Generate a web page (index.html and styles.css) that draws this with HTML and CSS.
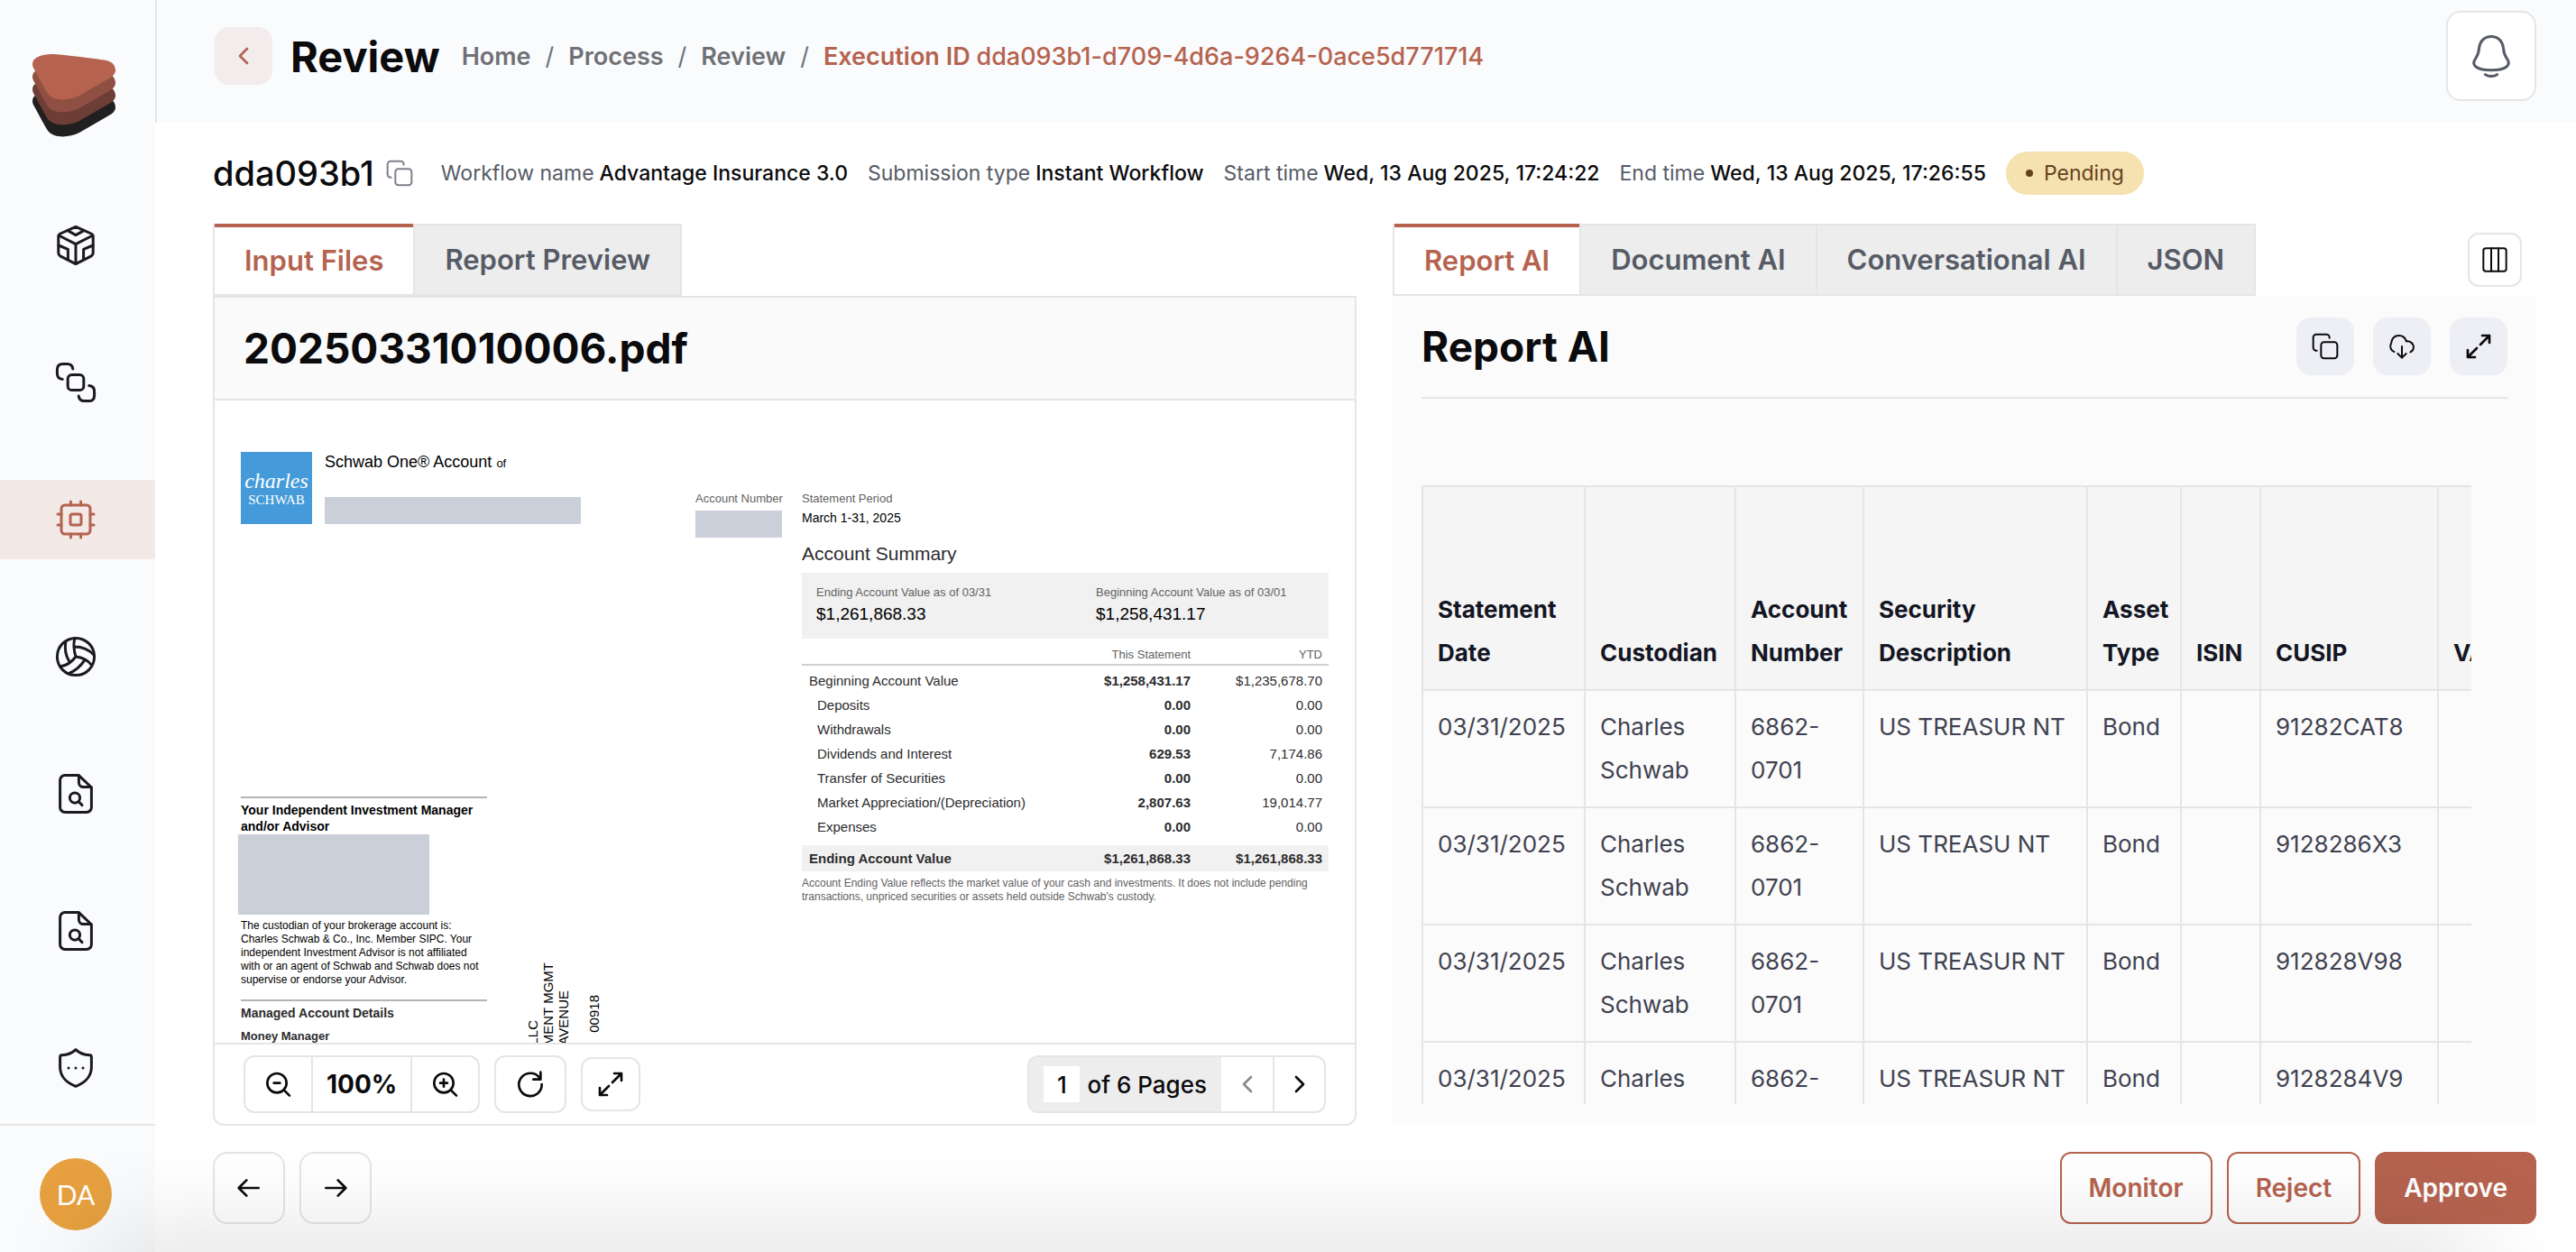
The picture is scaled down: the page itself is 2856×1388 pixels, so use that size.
FILE: index.html
```html
<!DOCTYPE html>
<html lang="en">
<head>
    <meta charset="UTF-8">
    <meta name="viewport" content="width=device-width, initial-scale=1.0">
    <title>Review</title>
    <link rel="stylesheet" href="styles.css">
</head>
<body>
    <!-- Shared icons -->
    <svg class="sprite" aria-hidden="true">
        <symbol id="icon-copy" viewBox="0 0 24 24">
            <rect x="8.5" y="8.5" width="13.5" height="13.5" rx="2.5"/>
            <path d="M15.5 5V4.5A2.5 2.5 0 0 0 13 2H4.5A2.5 2.5 0 0 0 2 4.5V13a2.5 2.5 0 0 0 2.5 2.5H5"/>
        </symbol>
        <symbol id="icon-expand" viewBox="0 0 24 24">
            <path d="M15 3h6v6M21 3l-7.5 7.5M9 21H3v-6M3 21l7.5-7.5"/>
        </symbol>
        <symbol id="icon-file-search" viewBox="0 0 24 24">
            <path d="M13.7 1.8H6A2.7 2.7 0 0 0 3.3 4.5v15A2.7 2.7 0 0 0 6 22.2h12a2.7 2.7 0 0 0 2.7-2.7V8.5Z"/>
            <path d="M13.7 2v3.8a2.5 2.5 0 0 0 2.5 2.5h4.3"/>
            <circle cx="11.5" cy="14.3" r="2.8"/>
            <path d="M13.6 16.4l1.9 1.9"/>
        </symbol>
        <symbol id="icon-left" viewBox="0 0 24 24"><path d="M15 6l-6 6 6 6"/></symbol>
        <symbol id="icon-right" viewBox="0 0 24 24"><path d="M9 6l6 6-6 6"/></symbol>
    </svg>

    <div class="app">
        <aside class="sidebar">
            <a href="#" class="logo" aria-label="Dashboard">
                <svg width="92" height="92" viewBox="0 0 92 92">
                    <defs>
                        <path id="layer" d="M0 11C0 4 9 0 22 0c8 0 48 5 60 7 7 1.5 10 6 10 11 0 4-3 7-8 9.5L52 46c-12 6-28 6-34-1C14 40 5 22 2 17 .5 14.5 0 13 0 11Z"/>
                    </defs>
                    <use href="#layer" y="41" fill="#211f20"/>
                    <use href="#layer" y="28" fill="#6c3e36"/>
                    <use href="#layer" y="14" fill="#8f4f42"/>
                    <use href="#layer" fill="#b5634f"/>
                </svg>
            </a>

            <nav class="side-nav">
                <a href="#" class="side-link" aria-label="Models">
                    <svg class="icon icon-48" viewBox="0 0 24 24">
                        <path d="M12 1.7L20.5 5.5Q21.6 6 21.6 7.2V16.3Q21.6 17.4 20.6 17.9L12 22.3 3.4 17.9Q2.4 17.4 2.4 16.3V7.2Q2.4 6 3.5 5.5Z"/>
                        <path d="M2.6 6.5L12 11.3l9.4-4.8M12 11.3V22M7.5 3.8L12 6.3l4.5-2.5M2.5 12l5.2 2.2v5.4M21.5 12l-5.2 2.2v5.4"/>
                    </svg>
                </a>
                <a href="#" class="side-link" aria-label="Workflows">
                    <svg class="icon icon-48" viewBox="0 0 24 24">
                        <rect x="7.6" y="7.7" width="8.8" height="8.6" rx="2.2"/>
                        <path d="M10.4 4.5C10.2 2.7 9.2 1.7 7.3 1.7H4.8C2.7 1.7 1.7 2.7 1.7 4.8V7C1.7 9 2.7 10 4.6 10.2"/>
                        <path d="M19.4 13.8c1.9.2 2.9 1.2 2.9 3.2v2.2c0 2.1-1 3.1-3.1 3.1h-2.5c-1.9 0-2.9-1-3.1-2.8"/>
                    </svg>
                </a>
                <a href="#" class="side-link active" aria-label="Process">
                    <svg class="icon icon-48" viewBox="0 0 24 24">
                        <rect x="4" y="4" width="16" height="16" rx="2"/>
                        <rect x="9" y="9" width="6" height="6" rx="1"/>
                        <path d="M9.2 4V2M14.8 4V2M9.2 22v-2M14.8 22v-2M4 9H2M4 15H2M22 9h-2M22 15h-2"/>
                    </svg>
                </a>
                <a href="#" class="side-link" aria-label="Explore">
                    <svg class="icon icon-48" viewBox="0 0 24 24">
                        <circle cx="12" cy="12" r="10.3"/>
                        <path d="M11.4 1.9C10.6 5 10.9 8.5 12 12M12 12c-2.2 3-5.2 5-8.7 5.5M12 12c3.6.3 6.7 2 8.8 4.7M6.4 3.7c-.6 4-.1 7.6 2 10.9M11.2 6.5c4.2 0 8 1.4 11 4.7M17.2 13.6C14.8 17.2 11.8 20 8 21.3"/>
                    </svg>
                </a>
                <a href="#" class="side-link" aria-label="Search documents">
                    <svg class="icon icon-48"><use href="#icon-file-search"/></svg>
                </a>
                <a href="#" class="side-link" aria-label="Search reports">
                    <svg class="icon icon-48"><use href="#icon-file-search"/></svg>
                </a>
                <a href="#" class="side-link" aria-label="Security">
                    <svg class="icon icon-48" viewBox="0 0 24 24">
                        <path d="M12 1.8C10 3.8 7.5 4.7 4.2 4.9Q3.3 5 3.3 6V11.5C3.3 17 7.5 20.5 12 22.2 16.5 20.5 20.7 17 20.7 11.5V6Q20.7 5 19.8 4.9C16.5 4.7 14 3.8 12 1.8Z"/>
                        <path d="M8 12h.01M12 12h.01M16 12h.01"/>
                    </svg>
                </a>
            </nav>

            <div class="user">
                <button class="avatar">DA</button>
            </div>
        </aside>

        <main class="main">
            <header class="topbar">
                <button class="back-btn" aria-label="Back"><svg class="icon icon-32 bold"><use href="#icon-left"/></svg></button>
                <h1>Review</h1>
                <nav class="breadcrumb">
                    <a href="#">Home</a><span>/</span>
                    <a href="#">Process</a><span>/</span>
                    <a href="#">Review</a><span>/</span>
                    <a href="#" class="current">Execution ID <em>dda093b1-d709-4d6a-9264-0ace5d771714</em></a>
                </nav>
                <button class="bell-btn" aria-label="Notifications">
                    <svg class="icon icon-48" viewBox="0 0 24 24">
                        <path d="M12 1.2c-3.8 0-6.4 2.8-6.7 6.4-.2 2.6-.6 3.9-1.9 5.7C1 16.6 2.6 19.9 12 19.9s11-3.3 8.6-6.6c-1.3-1.8-1.7-3.1-1.9-5.7C18.4 4 15.8 1.2 12 1.2Z"/>
                        <path d="M8.7 22.3c1.7 1.3 4.9 1.3 6.6 0"/>
                    </svg>
                </button>
            </header>

            <div class="content">
                <div class="info">
                    <h2>dda093b1</h2>
                    <button class="copy-id" aria-label="Copy id"><svg class="icon icon-32"><use href="#icon-copy"/></svg></button>
                    <dl>
                        <div><dt>Workflow name</dt><dd>Advantage Insurance 3.0</dd></div>
                        <div><dt>Submission type</dt><dd>Instant Workflow</dd></div>
                        <div><dt>Start time</dt><dd>Wed, 13 Aug 2025, 17:24:22</dd></div>
                        <div><dt>End time</dt><dd>Wed, 13 Aug 2025, 17:26:55</dd></div>
                    </dl>
                    <span class="status">Pending</span>
                </div>

                <div class="columns">
                    <!-- Input document -->
                    <section class="column">
                        <div class="tab-row">
                            <div class="tabs">
                                <button class="tab active">Input Files</button>
                                <button class="tab">Report Preview</button>
                            </div>
                        </div>
                        <div class="viewer">
                            <div class="viewer-head"><h3>20250331010006.pdf</h3></div>

                            <div class="doc">
                                <div class="doc-left">
                                    <div class="doc-brand">
                                        <div class="schwab"><i>charles</i><b>SCHWAB</b></div>
                                        <div class="doc-owner">
                                            <p>Schwab One® Account <small>of</small></p>
                                            <div class="redacted owner-box"></div>
                                        </div>
                                    </div>
                                    <div class="doc-lower">
                                        <div class="advisor">
                                            <h4>Your Independent Investment Manager<br>and/or Advisor</h4>
                                            <div class="redacted advisor-box"></div>
                                            <p>The custodian of your brokerage account is:<br>Charles Schwab &amp; Co., Inc. Member SIPC. Your<br>independent Investment Advisor is not affiliated<br>with or an agent of Schwab and Schwab does not<br>supervise or endorse your Advisor.</p>
                                            <h4 class="managed">Managed Account Details</h4>
                                            <h5>Money Manager</h5>
                                        </div>
                                        <div class="mailing">
                                            <span>LLC</span>
                                            <span>MENT MGMT</span>
                                            <span>AVENUE</span>
                                            <span class="mail-code">00918</span>
                                        </div>
                                    </div>
                                </div>

                                <div class="doc-account">
                                    <p class="doc-label">Account Number</p>
                                    <div class="redacted account-box"></div>
                                </div>

                                <div class="doc-summary">
                                    <p class="doc-label">Statement Period</p>
                                    <p class="period">March 1-31, 2025</p>
                                    <h4>Account Summary</h4>
                                    <div class="totals">
                                        <div><p class="doc-label">Ending Account Value as of 03/31</p><p>$1,261,868.33</p></div>
                                        <div><p class="doc-label">Beginning Account Value as of 03/01</p><p>$1,258,431.17</p></div>
                                    </div>
                                    <table class="summary-table">
                                        <thead>
                                            <tr><th></th><th>This Statement</th><th>YTD</th></tr>
                                        </thead>
                                        <tbody>
                                            <tr class="first"><td>Beginning Account Value</td><td>$1,258,431.17</td><td>$1,235,678.70</td></tr>
                                            <tr><td>Deposits</td><td>0.00</td><td>0.00</td></tr>
                                            <tr><td>Withdrawals</td><td>0.00</td><td>0.00</td></tr>
                                            <tr><td>Dividends and Interest</td><td>629.53</td><td>7,174.86</td></tr>
                                            <tr><td>Transfer of Securities</td><td>0.00</td><td>0.00</td></tr>
                                            <tr><td>Market Appreciation/(Depreciation)</td><td>2,807.63</td><td>19,014.77</td></tr>
                                            <tr><td>Expenses</td><td>0.00</td><td>0.00</td></tr>
                                        </tbody>
                                        <tfoot>
                                            <tr><td>Ending Account Value</td><td>$1,261,868.33</td><td>$1,261,868.33</td></tr>
                                        </tfoot>
                                    </table>
                                    <p class="note">Account Ending Value reflects the market value of your cash and investments. It does not include pending<br>transactions, unpriced securities or assets held outside Schwab's custody.</p>
                                </div>
                            </div>

                            <div class="viewer-bar">
                                <div class="group">
                                    <button aria-label="Zoom out">
                                        <svg class="icon icon-32 bold" viewBox="0 0 24 24"><circle cx="10.5" cy="11" r="8"/><path d="M16.5 17l4.5 4.5M8 11h5"/></svg>
                                    </button>
                                    <span class="zoom-value">100%</span>
                                    <button aria-label="Zoom in">
                                        <svg class="icon icon-32 bold" viewBox="0 0 24 24"><circle cx="10.5" cy="11" r="8"/><path d="M16.5 17l4.5 4.5M7.5 11h6M10.5 8v6"/></svg>
                                    </button>
                                </div>
                                <button class="bar-btn rotate" aria-label="Rotate">
                                    <svg class="icon icon-32 bold" viewBox="0 0 24 24"><path d="M19.5 6.5A9.5 9.5 0 1 0 21.5 12M20.5 2v6h-6"/></svg>
                                </button>
                                <button class="bar-btn full" aria-label="Full screen"><svg class="icon icon-32 bold"><use href="#icon-expand"/></svg></button>
                                <div class="pager">
                                    <label><input type="text" value="1" aria-label="Page"> of 6 Pages</label>
                                    <button aria-label="Previous page" disabled><svg class="icon icon-32 bold"><use href="#icon-left"/></svg></button>
                                    <button aria-label="Next page"><svg class="icon icon-32 bold"><use href="#icon-right"/></svg></button>
                                </div>
                            </div>
                        </div>
                    </section>

                    <!-- Extracted report -->
                    <section class="column">
                        <div class="tab-row">
                            <div class="tabs">
                                <button class="tab active">Report AI</button>
                                <button class="tab">Document AI</button>
                                <button class="tab">Conversational AI</button>
                                <button class="tab">JSON</button>
                            </div>
                            <button class="layout-btn" aria-label="Columns">
                                <svg class="icon icon-32" viewBox="0 0 24 24"><rect x="2.5" y="2.5" width="19" height="19" rx="2"/><path d="M9 2.5v19M15 2.5v19"/></svg>
                            </button>
                        </div>
                        <div class="report">
                            <div class="report-head">
                                <h3>Report AI</h3>
                                <button class="tool-btn" aria-label="Copy"><svg class="icon icon-32"><use href="#icon-copy"/></svg></button>
                                <button class="tool-btn" aria-label="Download">
                                    <svg class="icon icon-32" viewBox="0 0 24 24"><path d="M5.5 16.5A5 5 0 0 1 3 9.5C3.5 5.5 6 3 9.5 3c3.2 0 5.3 1.9 6.2 4.800 3.3-.3 5.8 1.7 6 4.4.1 2.2-1 3.7-2.7 4.6M12 12v9.5M8.5 18l3.5 3.5 3.5-3.5"/></svg>
                                </button>
                                <button class="tool-btn" aria-label="Expand"><svg class="icon icon-32 bold"><use href="#icon-expand"/></svg></button>
                            </div>
                            <div class="table-wrap">
                                <table class="holdings">
                                    <colgroup>
                                        <col class="c-date"><col class="c-custodian"><col class="c-account"><col class="c-security"><col class="c-type"><col class="c-isin"><col class="c-cusip"><col class="c-value">
                                    </colgroup>
                                    <thead>
                                        <tr>
                                            <th>Statement Date</th>
                                            <th>Custodian</th>
                                            <th>Account Number</th>
                                            <th>Security Description</th>
                                            <th>Asset Type</th>
                                            <th>ISIN</th>
                                            <th>CUSIP</th>
                                            <th>VALOR</th>
                                        </tr>
                                    </thead>
                                    <tbody>
                                        <tr><td>03/31/2025</td><td>Charles Schwab</td><td>6862-0701</td><td>US TREASUR NT</td><td>Bond</td><td></td><td>91282CAT8</td><td></td></tr>
                                        <tr><td>03/31/2025</td><td>Charles Schwab</td><td>6862-0701</td><td>US TREASU NT</td><td>Bond</td><td></td><td>9128286X3</td><td></td></tr>
                                        <tr><td>03/31/2025</td><td>Charles Schwab</td><td>6862-0701</td><td>US TREASUR NT</td><td>Bond</td><td></td><td>912828V98</td><td></td></tr>
                                        <tr><td>03/31/2025</td><td>Charles Schwab</td><td>6862-0701</td><td>US TREASUR NT</td><td>Bond</td><td></td><td>9128284V9</td><td></td></tr>
                                    </tbody>
                                </table>
                            </div>
                        </div>
                    </section>
                </div>

                <footer class="actions">
                    <button class="nav-btn" aria-label="Previous"><svg class="icon icon-32 bold" viewBox="0 0 24 24"><path d="M20 12H4M10 5.5L3.5 12l6.5 6.5"/></svg></button>
                    <button class="nav-btn" aria-label="Next"><svg class="icon icon-32 bold" viewBox="0 0 24 24"><path d="M4 12h16M14 5.5l6.5 6.5-6.5 6.5"/></svg></button>
                    <button class="btn push">Monitor</button>
                    <button class="btn">Reject</button>
                    <button class="btn primary">Approve</button>
                </footer>
            </div>
        </main>
    </div>
</body>
</html>
```

FILE: styles.css
```css
:root {
    --brand: #b5634f;
    --line: #e5e5e5;
    --soft: #fafbfd;
    --ink: #0b0b0d;
    --muted: #565b66;
}

* {
    margin: 0;
    padding: 0;
    box-sizing: border-box;
}

body {
    background: #fff;
    color: var(--ink);
    font-family: Inter, "Liberation Sans", sans-serif;
    font-size: 23px;
    overflow: hidden;
}

/* soft shade along the bottom edge of the window */
body::after {
    content: "";
    position: fixed;
    left: 110px;
    right: 110px;
    bottom: -40px;
    height: 40px;
    box-shadow: 0 0 110px rgba(0, 0, 0, 0.25);
    pointer-events: none;
}

button,
input {
    font: inherit;
    color: inherit;
    background: none;
    border: none;
}

button {
    display: flex;
    align-items: center;
    justify-content: center;
    cursor: pointer;
}

a {
    color: inherit;
    text-decoration: none;
}

.sprite {
    display: none;
}

.icon {
    fill: none;
    stroke: currentColor;
    stroke-width: 1.5;
    stroke-linecap: round;
    stroke-linejoin: round;
    flex: none;
}

.icon-48 {
    width: 48px;
    height: 48px;
}

.icon-32 {
    width: 32px;
    height: 32px;
}

.bold {
    stroke-width: 2;
}

.app {
    display: flex;
    height: 100vh;
}

/* Sidebar */
.sidebar {
    display: flex;
    flex-direction: column;
    width: 172px;
    flex: none;
    background: var(--soft);
    color: #1b1b1d;
}

.logo {
    padding: 60px 36px 76px;
}

.logo svg {
    display: block;
}

.side-nav {
    display: flex;
    flex-direction: column;
    gap: 64px;
    flex: 1;
}

.side-link {
    display: flex;
    align-items: center;
    justify-content: center;
    height: 88px;
    padding-right: 4px;
}

.side-link.active {
    background: #f3e9e7;
    color: var(--brand);
}

.user {
    display: flex;
    justify-content: center;
    border-top: 2px solid var(--line);
    padding: 36px 4px 24px 0;
}

.avatar {
    width: 80px;
    height: 80px;
    border-radius: 50%;
    background: #e6a03f;
    color: #fff;
    font-family: Lato, sans-serif;
    font-size: 30px;
}

/* Top bar */
.main {
    display: flex;
    flex-direction: column;
    flex: 1;
    min-width: 0;
}

.topbar {
    display: flex;
    align-items: center;
    height: 136px;
    flex: none;
    padding: 0 44px 12px 64px;
    background: var(--soft);
    border-left: 2px solid var(--line);
}

.back-btn {
    width: 64px;
    height: 64px;
    border-radius: 16px;
    background: #f3ecec;
    color: var(--brand);
}

.topbar h1 {
    margin: 0 24px 0 20px;
    font-size: 47px;
    font-weight: 700;
}

.breadcrumb {
    display: flex;
    gap: 16px;
    color: #6f7175;
    font-size: 27px;
    font-weight: 600;
}

.breadcrumb span {
    font-weight: 400;
}

.breadcrumb .current {
    color: var(--brand);
}

.breadcrumb em {
    font-style: normal;
    font-weight: 500;
}

.bell-btn {
    width: 100px;
    height: 100px;
    margin-left: auto;
    border: 2px solid var(--line);
    border-radius: 16px;
    background: #fff;
    color: var(--muted);
}

/* Execution info */
.content {
    display: flex;
    flex-direction: column;
    flex: 1;
    min-height: 0;
    padding: 32px 44px 31px 64px;
}

.info {
    display: flex;
    align-items: center;
    height: 48px;
    flex: none;
}

.info h2 {
    font-size: 38px;
    font-weight: 500;
}

.copy-id {
    margin: 0 30px 0 12px;
    color: #7c808b;
}

.info dl {
    display: flex;
    gap: 22px;
    margin-right: 22px;
}

.info dl div {
    display: flex;
    gap: 6px;
}

.info dt {
    color: var(--muted);
}

.info dd {
    font-weight: 500;
}

.status {
    display: flex;
    align-items: center;
    gap: 12px;
    height: 48px;
    padding: 0 22px;
    border-radius: 24px;
    background: #f6e1b1;
    color: #64421c;
}

.status::before {
    content: "";
    width: 8px;
    height: 8px;
    border-radius: 50%;
    background: currentColor;
}

/* Columns and tabs */
.columns {
    display: grid;
    grid-template-columns: 1fr 1fr;
    gap: 40px;
    flex: 1;
    min-height: 0;
    padding-top: 32px;
}

.column {
    display: flex;
    flex-direction: column;
    min-width: 0;
    min-height: 0;
}

.tab-row {
    display: flex;
    align-items: center;
    justify-content: space-between;
    height: 80px;
    flex: none;
    padding-right: 16px;
}

.tabs {
    display: flex;
    height: 80px;
    border: 2px solid var(--line);
    border-top: none;
}

.tab {
    padding: 0 33px 2px;
    background: #ededed;
    border-top: 2px solid var(--line);
    color: var(--muted);
    font-size: 31px;
    font-weight: 600;
}

.tab + .tab {
    border-left: 2px solid var(--line);
}

.tab.active {
    background: #fff;
    border-top: 4px solid var(--brand);
    color: var(--brand);
}

.layout-btn {
    width: 60px;
    height: 60px;
    border: 2px solid var(--line);
    border-radius: 12px;
}

/* Viewer */
.viewer {
    display: flex;
    flex-direction: column;
    flex: 1;
    min-height: 0;
    border: 2px solid var(--line);
    border-radius: 0 0 12px 12px;
}

.viewer-head {
    display: flex;
    align-items: center;
    height: 114px;
    flex: none;
    padding: 0 32px;
    background: #fafafa;
    border-bottom: 2px solid var(--line);
}

.viewer-head h3,
.report-head h3 {
    font-size: 46px;
    font-weight: 700;
}

.doc {
    display: flex;
    flex: 1;
    min-height: 0;
    overflow: hidden;
    padding: 57px 29px 0;
    font-family: "Liberation Sans", Arial, sans-serif;
    font-size: 13px;
    line-height: 15px;
    color: #2c2c2e;
}

.redacted {
    background: #cacfda;
}

.doc-left {
    flex: 1;
}

.doc-brand {
    display: flex;
    gap: 14px;
    height: 80px;
}

.schwab {
    display: flex;
    flex-direction: column;
    align-items: center;
    justify-content: center;
    width: 79px;
    background: #459bd9;
    color: #fff;
    font-family: "Liberation Serif", serif;
    font-size: 15px;
    line-height: 17px;
}

.schwab i {
    font-size: 24px;
    line-height: 26px;
}

.schwab b {
    font-weight: 400;
}

.doc-owner {
    display: flex;
    flex-direction: column;
    justify-content: space-between;
    color: #000;
    font-size: 18px;
    line-height: 22px;
}

.doc-owner small {
    font-size: 13px;
}

.owner-box {
    width: 284px;
    height: 30px;
}

.doc-lower {
    display: flex;
    gap: 42px;
    margin-top: 302px;
    color: #000;
}

.advisor {
    width: 273px;
    font-size: 12px;
}

.advisor h4 {
    border-top: 2px solid #b4b4b4;
    padding-top: 4px;
    font-size: 14px;
    line-height: 18px;
    white-space: nowrap;
}

.advisor-box {
    width: 212px;
    height: 89px;
    margin: 0 0 5px -3px;
}

.advisor .managed {
    margin-top: 14px;
    color: #2c2c2e;
}

.advisor h5 {
    margin-top: 9px;
    color: #2c2c2e;
    font-size: 13px;
}

.mailing {
    display: flex;
    align-items: flex-end;
    height: 276px;
    font-size: 15px;
    line-height: 17px;
}

.mailing span {
    writing-mode: vertical-rl;
    transform: rotate(180deg);
    white-space: nowrap;
}

.mailing .mail-code {
    margin: 0 0 14px 17px;
}

.doc-account {
    width: 96px;
    margin: 44px 22px 0 0;
}

.doc-label {
    color: #626262;
    font-size: 13px;
    white-space: nowrap;
}

.account-box {
    height: 30px;
    margin-top: 6px;
}

.doc-summary {
    width: 584px;
    padding-top: 44px;
}

.doc-summary .period {
    margin-top: 7px;
    color: #000;
    font-size: 14px;
}

.doc-summary h4 {
    margin: 20px 0 9px;
    font-size: 21px;
    font-weight: 400;
    line-height: 24px;
}

.totals {
    display: grid;
    grid-template-columns: 310px 1fr;
    height: 73px;
    padding: 14px 16px;
    background: #f1f1f1;
    color: #000;
    font-size: 19px;
    line-height: 34px;
}

.totals .doc-label {
    line-height: 15px;
}

.summary-table {
    width: 100%;
    border-collapse: collapse;
    font-size: 15px;
}

.summary-table th {
    height: 29px;
    padding: 0 7px 3px 0;
    border-bottom: 2px solid #cfcfcf;
    color: #626262;
    font-size: 13px;
    font-weight: 400;
    vertical-align: bottom;
}

.summary-table th,
.summary-table td {
    text-align: right;
}

.summary-table td {
    height: 27px;
    padding-right: 7px;
}

.summary-table td:first-child {
    padding-left: 17px;
    text-align: left;
}

.summary-table td:nth-child(2) {
    width: 140px;
    font-weight: 700;
}

.summary-table td:nth-child(3) {
    width: 146px;
}

.summary-table .first td {
    height: 31px;
    padding-top: 2px;
}

.summary-table .first td:first-child,
.summary-table tfoot td:first-child {
    padding-left: 8px;
}

.summary-table tbody tr:last-child td {
    height: 34px;
    padding-bottom: 8px;
}

.summary-table tfoot td {
    height: 29px;
    background: #f1f1f1;
    font-weight: 700;
}

.note {
    margin-top: 6px;
    color: #626262;
    white-space: nowrap;
    font-size: 12px;
}

/* Viewer toolbar */
.viewer-bar {
    display: flex;
    align-items: center;
    gap: 16px;
    height: 90px;
    flex: none;
    padding: 0 32px;
    border-top: 2px solid var(--line);
}

.group,
.pager {
    display: flex;
    height: 64px;
    border: 2px solid var(--line);
    border-radius: 12px;
    overflow: hidden;
}

.group button {
    width: 73px;
}

.zoom-value {
    display: flex;
    align-items: center;
    padding: 0 15px;
    border: solid var(--line);
    border-width: 0 2px;
    font-size: 28px;
    font-weight: 700;
}

.bar-btn {
    border: 2px solid var(--line);
    border-radius: 12px;
}

.rotate {
    width: 80px;
    height: 64px;
}

.full {
    width: 66px;
    height: 60px;
}

.pager {
    margin-left: auto;
    font-size: 26px;
    font-weight: 500;
}

.pager label {
    display: flex;
    align-items: center;
    gap: 8px;
    padding: 0 16px;
    background: #ededed;
}

.pager input {
    width: 40px;
    height: 40px;
    background: #fff;
    text-align: center;
}

.pager button {
    width: 57px;
}

.pager button + button {
    border-left: 2px solid var(--line);
}

.pager button:disabled {
    color: #8a8a8a;
}

/* Report */
.report {
    display: flex;
    flex-direction: column;
    flex: 1;
    min-height: 0;
    margin-bottom: 2px;
    padding: 0 32px 22px;
    background: #fbfbfb;
}

.report-head {
    display: flex;
    align-items: center;
    gap: 21px;
    height: 114px;
    flex: none;
    border-bottom: 2px solid var(--line);
}

.report-head h3 {
    margin-right: auto;
}

.tool-btn {
    width: 64px;
    height: 64px;
    border-radius: 16px;
    background: #eeeff5;
}

.table-wrap {
    flex: 1;
    min-height: 0;
    overflow: hidden;
    margin: 96px 40px 0 0;
}

.holdings {
    width: 1326px;
    table-layout: fixed;
    border-collapse: collapse;
    color: #3f4250;
    font-size: 26px;
    line-height: 48px;
}

.holdings th,
.holdings td {
    border: 2px solid var(--line);
    padding: 16px;
    text-align: left;
    vertical-align: top;
}

.holdings th {
    height: 226px;
    padding-right: 0;
    background: #f5f5f5;
    color: #141624;
    font-weight: 700;
    vertical-align: bottom;
}

.holdings td {
    height: 130px;
}

.c-date { width: 180px; }
.c-custodian { width: 167px; }
.c-account { width: 142px; }
.c-security { width: 248px; }
.c-type { width: 104px; }
.c-isin { width: 88px; }
.c-cusip { width: 197px; }
.c-value { width: 200px; }

/* Footer actions */
.actions {
    display: flex;
    gap: 16px;
    flex: none;
    padding-top: 29px;
}

.nav-btn {
    width: 80px;
    height: 80px;
    border: 2px solid var(--line);
    border-radius: 16px;
}

.btn {
    height: 80px;
    padding: 0 30px;
    border: 2px solid var(--brand);
    border-radius: 12px;
    background: #fff;
    color: var(--brand);
    font-size: 28px;
    font-weight: 600;
}

.push {
    margin-left: auto;
}

.btn.primary {
    background: var(--brand);
    color: #fff;
}
```
